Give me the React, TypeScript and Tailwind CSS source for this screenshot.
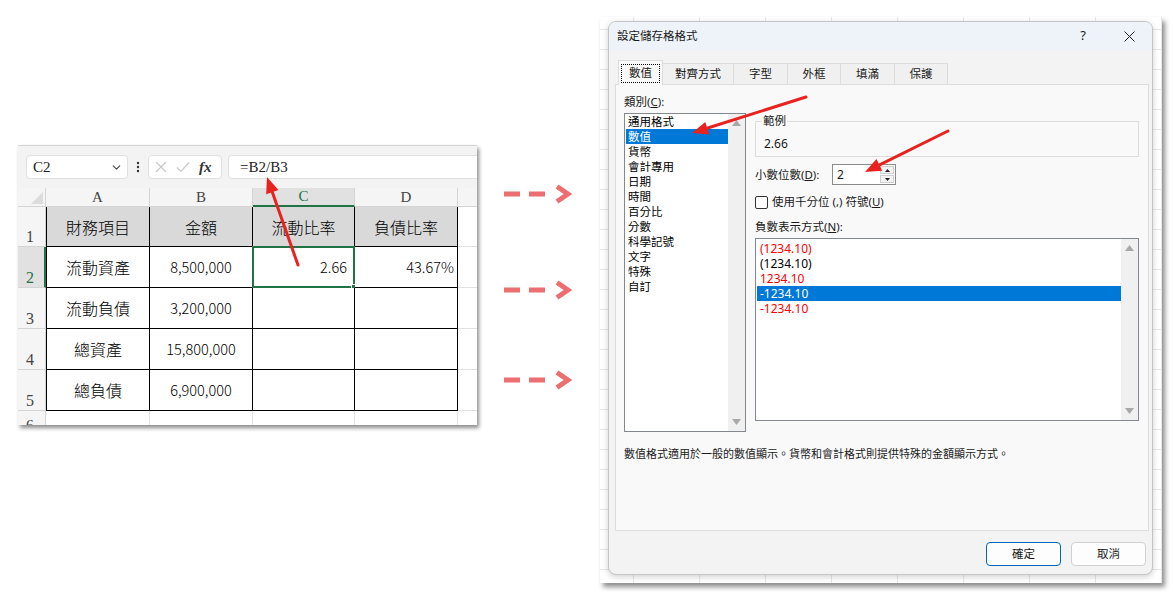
import { ChevronDown } from "lucide-react";

// Excel sheet on the left, "format cells" dialog on the right, with red callouts on top.

type Pt = [number, number];

const SHEET_FONT = "font-['Noto_Sans_CJK_TC',sans-serif]";
const SERIF = "font-['Liberation_Serif','Noto_Sans_CJK_TC',serif]";
const UI_FONT = "font-['Noto_Sans','Noto_Sans_CJK_TC',sans-serif]";

const ROWS = [
  ["財務項目", "金額", "流動比率", "負債比率"],
  ["流動資產", "8,500,000", "2.66", "43.67%"],
  ["流動負債", "3,200,000", "", ""],
  ["總資產", "15,800,000", "", ""],
  ["總負債", "6,900,000", "", ""],
];

const CATEGORIES = [
  "通用格式", "數值", "貨幣", "會計專用", "日期", "時間",
  "百分比", "分數", "科學記號", "文字", "特殊", "自訂",
];

const NEGATIVES = [
  { text: "(1234.10)", cls: "text-[#ff0000]" },
  { text: "(1234.10)", cls: "text-black" },
  { text: "1234.10", cls: "text-[#ff0000]" },
  { text: "-1234.10", cls: "bg-[#0078d7] text-white" },
  { text: "-1234.10", cls: "text-[#ff0000]" },
];

const TABS = [
  { label: "數值", w: "w-[45px]" },
  { label: "對齊方式", w: "w-[71px]" },
  { label: "字型", w: "w-[54px]" },
  { label: "外框", w: "w-[53px]" },
  { label: "填滿", w: "w-[54px]" },
  { label: "保護", w: "w-[53px]" },
];

function Callout({ from, to }: { from: Pt; to: Pt }) {
  const [x1, y1] = from;
  const [x2, y2] = to;
  const len = Math.hypot(x2 - x1, y2 - y1);
  const ux = (x2 - x1) / len;
  const uy = (y2 - y1) / len;
  const head = 16;
  const half = 6.5;
  const bx = x2 - ux * head;
  const by = y2 - uy * head;
  const pts = `${x2},${y2} ${bx - uy * half},${by + ux * half} ${bx + uy * half},${by - ux * half}`;
  return (
    <g>
      <line x1={x1} y1={y1} x2={bx + ux * 2} y2={by + uy * 2} stroke="#e8231f" strokeWidth={3} strokeLinecap="round" />
      <polygon points={pts} fill="#e8231f" />
    </g>
  );
}

function DashArrow() {
  return (
    <svg width="68" height="20" viewBox="0 0 68 20">
      <rect x="0" y="7.5" width="16" height="5" fill="#ec6e70" />
      <rect x="25" y="7.5" width="16" height="5" fill="#ec6e70" />
      <polyline points="53,2.5 64,10 53,17.5" fill="none" stroke="#ec6e70" strokeWidth="5" />
    </svg>
  );
}

function FormulaBar() {
  return (
    <div className="h-[42px] shrink-0 flex items-start pt-[9px] pl-[8px]">
      <div className="w-[102px] h-[24px] bg-white border border-[#e0e0e0] rounded-[4px] flex items-center justify-between pl-[6px] pr-[4px]">
        <span className={`${SERIF} text-[15px] text-[#222]`}>C2</span>
        <ChevronDown size={13} strokeWidth={2} className="text-[#444]" />
      </div>
      <div className="w-[20px] h-[24px] flex items-center justify-center">
        <svg width="4" height="12" viewBox="0 0 4 12">
          <circle cx="2" cy="2" r="1.2" fill="#333" />
          <circle cx="2" cy="6" r="1.2" fill="#333" />
          <circle cx="2" cy="10" r="1.2" fill="#333" />
        </svg>
      </div>
      <div className="w-[74px] h-[24px] bg-white border border-[#e0e0e0] rounded-[4px] flex items-center gap-[9px] pl-[6px]">
        <svg width="12" height="12" viewBox="0 0 12 12">
          <path d="M1 1L11 11M11 1L1 11" stroke="#c8c8c8" strokeWidth="1.2" />
        </svg>
        <svg width="14" height="12" viewBox="0 0 14 12">
          <path d="M1 6.5L5 10.5L13 1.5" fill="none" stroke="#c8c8c8" strokeWidth="1.2" />
        </svg>
        <span className={`${SERIF} italic font-bold text-[15px] text-[#333] leading-none`}>fx</span>
      </div>
      <div className="ml-[6px] flex-1 h-[24px] bg-white border border-r-0 border-[#e0e0e0] rounded-l-[4px] flex items-center pl-[11px]">
        <span className={`${SERIF} text-[15px] text-[#222]`}>=B2/B3</span>
      </div>
    </div>
  );
}

function Sheet() {
  return (
    <div className="ml-[18px] mt-[145px] w-[459px] h-[280px] shrink-0 bg-[#f3f3f3] border-t border-[#d4d4d4] shadow-[2px_3px_4px_rgba(0,0,0,0.45)] flex flex-col overflow-hidden">
      <FormulaBar />
      <div className={`grid grid-cols-[28px_104px_103px_102px_103px_1fr] grid-rows-[19px_40px_41px_41px_41px_41px_1fr] flex-1 bg-white ${SHEET_FONT}`}>
        <div className="bg-[#f5f5f5] border-r border-b border-[#d4d4d4] flex items-end justify-end p-[2px]">
          <svg width="12" height="12" viewBox="0 0 12 12">
            <polygon points="12,0 12,12 0,12" fill="#dcdcdc" />
          </svg>
        </div>
        {["A", "B", "C", "D"].map((c) =>
          c === "C" ? (
            <div key={c} className={`${SERIF} bg-[#e1e1e1] border-r border-[#d4d4d4] border-b-2 border-b-[#217346] text-[#217346] text-[15px] leading-none flex items-center justify-center`}>
              {c}
            </div>
          ) : (
            <div key={c} className={`${SERIF} bg-[#f5f5f5] border-r border-b border-[#d4d4d4] text-[#444] text-[15px] leading-none flex items-center justify-center`}>
              {c}
            </div>
          )
        )}
        <div className="bg-[#f5f5f5] border-b border-[#d4d4d4]" />

        {ROWS.map((row, ri) => (
          <RowCells key={ri} row={row} ri={ri} />
        ))}

        {/* row 6 is clipped by the bottom edge of the window */}
        <div className="bg-[#f5f5f5] border-r border-[#d4d4d4] pl-[8px] overflow-hidden">
          <span className={`${SERIF} text-[15px] text-[#444] leading-none`}>6</span>
        </div>
        <div className="border-r border-[#e1e1e1]" />
        <div className="border-r border-[#e1e1e1]" />
        <div className="border-r border-[#e1e1e1]" />
        <div className="border-r border-[#e1e1e1]" />
        <div />
      </div>
    </div>
  );
}

function RowCells({ row, ri }: { row: string[]; ri: number }) {
  const isHead = ri === 0;
  const isActive = ri === 1;
  return (
    <>
      <div
        className={
          isActive
            ? "bg-[#e1e1e1] border-r-2 border-r-[#217346] border-b border-b-[#d4d4d4] flex items-end pl-[8px] pb-[1px]"
            : "bg-[#f5f5f5] border-r border-b border-[#d4d4d4] flex items-end pl-[8px] pb-[1px]"
        }
      >
        <span className={`${SERIF} text-[16px] leading-none ${isActive ? "text-[#217346]" : "text-[#444]"}`}>{ri + 1}</span>
      </div>
      {row.map((v, ci) => {
        const numeric = ci >= 2 && !isHead;
        const base = "relative flex items-center border-r border-b border-black text-black font-light";
        const fill = isHead ? "bg-[#d9d9d9]" : "bg-white";
        const edge = ci === 0 ? "border-l" : "";
        const align = numeric ? (ci === 2 ? "justify-end pr-[7px]" : "justify-end pr-[3px]") : "justify-center";
        const size = /^[0-9]/.test(v) ? "text-[14.5px]" : "text-[16px]";
        return (
          <div key={ci} className={`${base} ${fill} ${edge} ${align} ${size}`}>
            {v}
            {isActive && ci === 2 && (
              <>
                <div className="absolute -left-px -top-px -right-px -bottom-px border-2 border-[#217346]" />
                <div className="absolute -right-[4px] -bottom-[4px] w-[7px] h-[7px] bg-[#217346] border border-white" />
              </>
            )}
          </div>
        );
      })}
      <div className="border-b border-[#e1e1e1] bg-white" />
    </>
  );
}

function ScrollTrack() {
  return (
    <div className="w-[17px] bg-[#f0f0f0] flex flex-col items-center justify-between py-[6px]">
      <svg width="9" height="6" viewBox="0 0 9 6">
        <polygon points="4.5,0 9,6 0,6" fill="#a8a8a8" />
      </svg>
      <svg width="9" height="6" viewBox="0 0 9 6">
        <polygon points="0,0 9,0 4.5,6" fill="#a8a8a8" />
      </svg>
    </div>
  );
}

function FormatDialog() {
  return (
    <div className="ml-[28px] mt-[17px] w-[562px] h-[566px] shrink-0 pt-[4px] pl-[8px] bg-white bg-[linear-gradient(to_right,#e6e6e6_1px,transparent_1px),linear-gradient(to_bottom,#e6e6e6_1px,transparent_1px)] bg-[size:66px_20px] bg-[position:33px_12px] shadow-[3px_4px_5px_rgba(0,0,0,0.45)]">
      <div className={`w-[545px] h-[554px] rounded-[8px] border border-[#c4c4c4] bg-[#f3f3f3] shadow-[0_2px_6px_rgba(0,0,0,0.18)] overflow-hidden flex flex-col text-[#1a1a1a] ${UI_FONT}`}>
        <div className="h-[28px] shrink-0 bg-[#eef3f9] flex items-center">
          <span className="pl-[8px] text-[11.5px]">設定儲存格格式</span>
          <span className="ml-auto w-[30px] text-center text-[13px]">?</span>
          <div className="ml-[8px] w-[46px] flex justify-center">
            <svg width="11" height="11" viewBox="0 0 11 11">
              <path d="M0.5 0.5L10.5 10.5M10.5 0.5L0.5 10.5" stroke="#222" strokeWidth="1" />
            </svg>
          </div>
        </div>

        <div className="mt-[10px] h-[24px] shrink-0 flex items-end pl-[9px]">
          {TABS.map((t, i) =>
            i === 0 ? (
              <div key={t.label} className={`${t.w} h-[25px] -mb-px relative z-10 bg-[#f9f9f9] border border-b-0 border-[#dcdcdc] flex items-center justify-center`}>
                <span className="px-[7px] h-[19px] border border-dotted border-black flex items-center text-[11.5px]">{t.label}</span>
              </div>
            ) : (
              <div key={t.label} className={`${t.w} h-[21px] bg-[#f0f0f0] border-t border-r border-[#dcdcdc] flex items-center justify-center text-[11.5px]`}>
                {t.label}
              </div>
            )
          )}
        </div>

        <div className="ml-[6px] w-[534px] h-[447px] shrink-0 bg-[#f9f9f9] border border-[#dcdcdc] pt-[9px] px-[8px]">
          <div className="flex gap-[9px]">
            <div className="w-[122px] flex flex-col">
              <div className="h-[19px] text-[11.5px] leading-[16px]">
                類別(<span className="underline">C</span>):
              </div>
              <div className="h-[319px] bg-white border border-[#828790] flex">
                <div className="flex-1 pl-px">
                  {CATEGORIES.map((c, i) => (
                    <div
                      key={c}
                      className={`h-[15px] leading-[15px] pl-[2px] text-[11.5px] ${i === 1 ? "bg-[#0078d7] text-white" : "text-black"}`}
                    >
                      {c}
                    </div>
                  ))}
                </div>
                <ScrollTrack />
              </div>
            </div>

            <div className="w-[384px] flex flex-col pt-[20px]">
              <fieldset className="border border-[#dcdcdc] px-[6px] pb-[5px]">
                <legend className="px-[1px] text-[11.5px] leading-[14px]">範例</legend>
                <div className="pt-[9px] pl-[2px] text-[12px] leading-[14px]">2.66</div>
              </fieldset>

              <div className="mt-[7px] h-[21px] flex items-center">
                <span className="w-[77px] text-[11.5px]">
                  小數位數(<span className="underline">D</span>):
                </span>
                <div className="w-[64px] h-[21px] bg-white border border-[#8a8a8a] flex">
                  <span className="flex-1 pl-[4px] text-[12px] leading-[19px]">2</span>
                  <div className="w-[15px] flex flex-col gap-px py-px pr-px">
                    <div className="flex-1 bg-[#f3f3f3] border border-[#cfcfcf] flex items-center justify-center">
                      <svg width="5" height="3" viewBox="0 0 5 3"><polygon points="2.5,0 5,3 0,3" fill="#222" /></svg>
                    </div>
                    <div className="flex-1 bg-[#f3f3f3] border border-[#cfcfcf] flex items-center justify-center">
                      <svg width="5" height="3" viewBox="0 0 5 3"><polygon points="0,0 5,0 2.5,3" fill="#222" /></svg>
                    </div>
                  </div>
                </div>
              </div>

              <div className="mt-[10px] h-[14px] flex items-center gap-[4px]">
                <div className="w-[13px] h-[13px] bg-white border border-[#333] rounded-[2px]" />
                <span className="text-[11.5px]">
                  使用千分位 (,) 符號(<span className="underline">U</span>)
                </span>
              </div>

              <div className="mt-[11px] h-[14px] flex items-center text-[11.5px]">
                負數表示方式(<span className="underline">N</span>):
              </div>

              <div className="mt-[4px] h-[183px] bg-white border border-[#828790] flex">
                <div className="flex-1 pt-[2px] pl-px">
                  {NEGATIVES.map((n, i) => (
                    <div key={i} className={`h-[15px] leading-[15px] pl-[3px] text-[12px] ${n.cls}`}>
                      {n.text}
                    </div>
                  ))}
                </div>
                <ScrollTrack />
              </div>
            </div>
          </div>

          <p className="mt-[15px] text-[11px] leading-[14px]">
            數值格式適用於一般的數值顯示。貨幣和會計格式則提供特殊的金額顯示方式。
          </p>
        </div>

        <div className="mt-[11px] flex justify-end gap-[10px] pr-[6px]">
          <button className="w-[75px] h-[24px] rounded-[4px] bg-[#fdfdfd] border border-[#0067c0] text-[11.5px]">確定</button>
          <button className="w-[75px] h-[24px] rounded-[4px] bg-[#fdfdfd] border border-[#d0d0d0] text-[11.5px]">取消</button>
        </div>
      </div>
    </div>
  );
}

export default function App() {
  return (
    <div className="relative w-[1173px] h-[599px] bg-white overflow-hidden flex items-start">
      <Sheet />
      <div className="ml-[27px] mt-[184px] w-[68px] shrink-0 flex flex-col">
        <DashArrow />
        <div className="mt-[76px]"><DashArrow /></div>
        <div className="mt-[70px]"><DashArrow /></div>
      </div>
      <FormatDialog />
      <svg className="absolute left-0 top-0 pointer-events-none" width="1173" height="599" viewBox="0 0 1173 599">
        <Callout from={[298, 265]} to={[267, 177]} />
        <Callout from={[806, 97]} to={[692, 133]} />
        <Callout from={[948, 131]} to={[865, 172]} />
      </svg>
    </div>
  );
}
